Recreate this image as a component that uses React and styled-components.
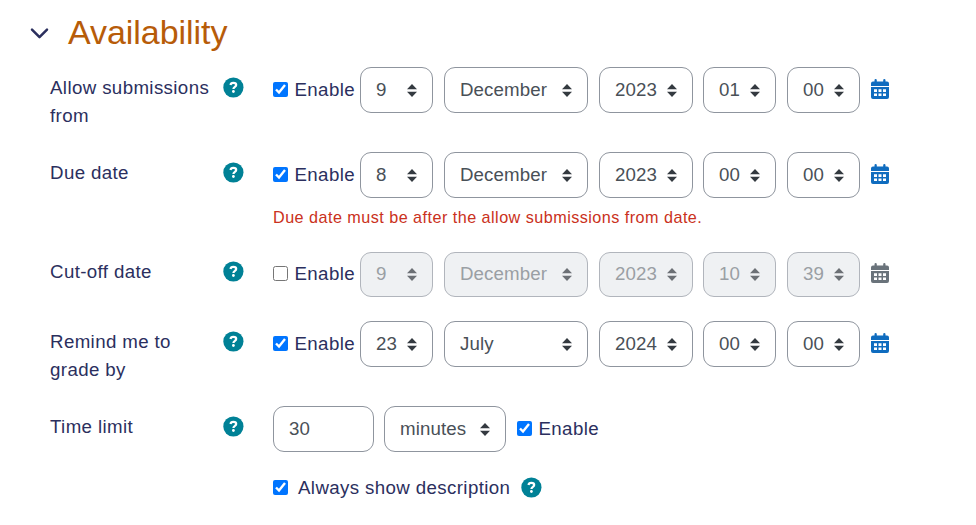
import React from "react";
import styled, { createGlobalStyle } from "styled-components";

const GlobalStyle = createGlobalStyle`
  *, *::before, *::after { box-sizing: border-box; }
  body {
    margin: 0;
    background: #fff;
    color: #2b2f5e;
    font-family: "Liberation Sans", Arial, sans-serif;
    font-size: 18.7px;
    line-height: 28px;
    letter-spacing: 0.38px;
  }
`;

const Fieldset = styled.section`
  width: 976px;
  height: 525px;
  overflow: hidden;
`;

const Header = styled.header`
  display: flex;
  align-items: center;
  height: 67px;
  padding-left: 30px;
`;

const Chevron = styled.svg`
  width: 19px;
  height: 13px;
  margin-right: 19px;
  fill: none;
  stroke: #2b2f5e;
  stroke-width: 2.5;
  stroke-linecap: round;
  stroke-linejoin: round;
`;

const Title = styled.h3`
  margin: -4px 0 0;
  color: #b75c09;
  font-size: 34px;
  font-weight: 400;
  line-height: 42px;
  letter-spacing: -0.05px;
`;

const Row = styled.div`
  display: grid;
  grid-template-columns: 173px 50px 1fr;
  align-items: start;
  height: ${(p) => p.$height}px;
  padding-left: 50px;
`;

const Label = styled.div`
  padding-top: ${(p) => (p.$compact ? 6 : 7)}px;
`;

const HelpSvg = styled.svg`
  flex: none;
  width: 21px;
  height: 21px;
  margin-top: ${(p) => (p.$compact ? 9 : 10)}px;
`;

const Controls = styled.div`
  display: flex;
  align-items: center;
  height: ${(p) => (p.$compact ? 45 : 46)}px;
`;

const InlineHelp = styled.span`
  display: flex;
  margin: -11px 0 0 11px;
`;

const CheckLabel = styled.label`
  display: flex;
  align-items: center;
  gap: ${(p) => p.$gap ?? 6.5}px;
  width: ${(p) => (p.$width ? `${p.$width}px` : "auto")};
  margin-top: ${(p) => (p.$compact ? -1 : 0)}px;
  white-space: nowrap;
`;

const Checkbox = styled.input.attrs({ type: "checkbox" })`
  flex: none;
  width: 15px;
  height: 15px;
  margin: 0 0 1px;
`;

const SelectBox = styled.div`
  display: flex;
  position: relative;
  width: ${(p) => p.$width}px;
  height: 100%;
  margin-right: ${(p) => p.$gap ?? 11}px;
`;

const control = `
  width: 100%;
  height: 100%;
  margin: 0;
  padding: 0 15px;
  border: 1px solid #8f959e;
  border-radius: 11px;
  background: #fff;
  color: #495057;
  font: inherit;
  letter-spacing: 0.1px;
  appearance: none;
`;

const NativeSelect = styled.select`
  ${control}
  &:disabled {
    padding-bottom: 1px;
    border-color: #b1b5bc;
    background: #eff1f3;
    color: #9a9fa4;
    opacity: 1;
  }
`;

const Arrows = styled.svg`
  position: absolute;
  right: 16px;
  top: 50%;
  width: 10px;
  height: 13px;
  margin-top: ${(p) => (p.$muted ? -6.5 : -6)}px;
  fill: ${(p) => (p.$muted ? "#6c7075" : "#343a40")};
  pointer-events: none;
`;

const NumberInput = styled.input`
  ${control}
  width: 101px;
  margin-right: 10px;
`;

const CalendarSvg = styled.svg`
  width: 18px;
  height: 20px;
  margin-top: ${(p) => (p.$muted ? -3 : -2)}px;
  fill: ${(p) => (p.$muted ? "#6a737b" : "#0f6cbf")};
`;

const ErrorText = styled.div`
  color: #ca3120;
  font-size: 16.2px;
  line-height: 24px;
  letter-spacing: 0.46px;
  margin-top: 7px;
`;

function Help({ compact }) {
  return (
    <HelpSvg viewBox="0 0 21 21" $compact={compact}>
      <circle cx="10.4" cy="10.5" r="10.1" fill="#008196" />
      <path
        d="M7.5 8C7.7 6.5 8.8 5.9 10.3 5.9C12 5.9 13.2 6.7 13.2 8.1C13.2 9.9 10.4 9.8 10.4 12"
        fill="none"
        stroke="#fff"
        strokeWidth="2.2"
      />
      <circle cx="10.4" cy="14.5" r="1.4" fill="#fff" />
    </HelpSvg>
  );
}

function Calendar({ muted }) {
  return (
    <CalendarSvg viewBox="0 0 18 20" $muted={muted}>
      <path d="M3.5 2.5V1.2a1.15 1.15 0 0 1 2.3 0v1.3h6.4V1.2a1.15 1.15 0 0 1 2.3 0v1.3H16a2 2 0 0 1 2 2V7H0V4.5a2 2 0 0 1 2-2z" />
      <path
        fillRule="evenodd"
        d="M0 8h18v10a2 2 0 0 1-2 2H2a2 2 0 0 1-2-2zM3 10.2v2.8h3v-2.8zM7.5 10.2v2.8h3v-2.8zM12 10.2v2.8h3v-2.8zM3 14.5v2.5h3v-2.5zM7.5 14.5v2.5h3v-2.5zM12 14.5v2.5h3v-2.5z"
      />
    </CalendarSvg>
  );
}

function Select({ value, width, gap, disabled }) {
  return (
    <SelectBox $width={width} $gap={gap}>
      <NativeSelect defaultValue={value} disabled={disabled}>
        <option>{value}</option>
      </NativeSelect>
      <Arrows viewBox="0 0 4 5" preserveAspectRatio="none" $muted={disabled}>
        <path d="M2 0L0 2h4zm0 5L0 3h4z" />
      </Arrows>
    </SelectBox>
  );
}

const columns = [
  { width: 73, gap: 11 },
  { width: 144, gap: 11 },
  { width: 94, gap: 10 },
  { width: 73, gap: 11 },
  { width: 73, gap: 11 },
];

const dates = [
  { label: "Allow submissions from", values: ["9", "December", "2023", "01", "00"], enabled: true, height: 85 },
  {
    label: "Due date",
    values: ["8", "December", "2023", "00", "00"],
    enabled: true,
    height: 100,
    error: "Due date must be after the allow submissions from date.",
  },
  { label: "Cut-off date", values: ["9", "December", "2023", "10", "39"], enabled: false, height: 69 },
  { label: "Remind me to grade by", values: ["23", "July", "2024", "00", "00"], enabled: true, height: 85 },
];

function DateRow({ label, values, enabled, height, error }) {
  return (
    <Row $height={height}>
      <Label $compact={!enabled}>{label}</Label>
      <Help compact={!enabled} />
      <div>
        <Controls $compact={!enabled}>
          <CheckLabel $width={87} $compact={!enabled}>
            <Checkbox defaultChecked={enabled} />
            Enable
          </CheckLabel>
          {values.map((value, i) => (
            <Select key={i} value={value} disabled={!enabled} {...columns[i]} />
          ))}
          <Calendar muted={!enabled} />
        </Controls>
        {error && <ErrorText>{error}</ErrorText>}
      </div>
    </Row>
  );
}

export default function App() {
  return (
    <>
      <GlobalStyle />
      <Fieldset>
        <Header>
          <Chevron viewBox="0 0 19 13">
            <path d="M2 2.7L9.5 10.2L17 2.7" />
          </Chevron>
          <Title>Availability</Title>
        </Header>
        {dates.map((row) => (
          <DateRow key={row.label} {...row} />
        ))}
        <Row $height={59}>
          <Label>Time limit</Label>
          <Help />
          <Controls>
            <NumberInput defaultValue="30" />
            <Select value="minutes" width={122} />
            <CheckLabel>
              <Checkbox defaultChecked />
              Enable
            </CheckLabel>
          </Controls>
        </Row>
        <Row $height={51}>
          <span />
          <span />
          <Controls>
            <CheckLabel $gap={10}>
              <Checkbox defaultChecked />
              Always show description
            </CheckLabel>
            <InlineHelp>
              <Help />
            </InlineHelp>
          </Controls>
        </Row>
      </Fieldset>
    </>
  );
}
